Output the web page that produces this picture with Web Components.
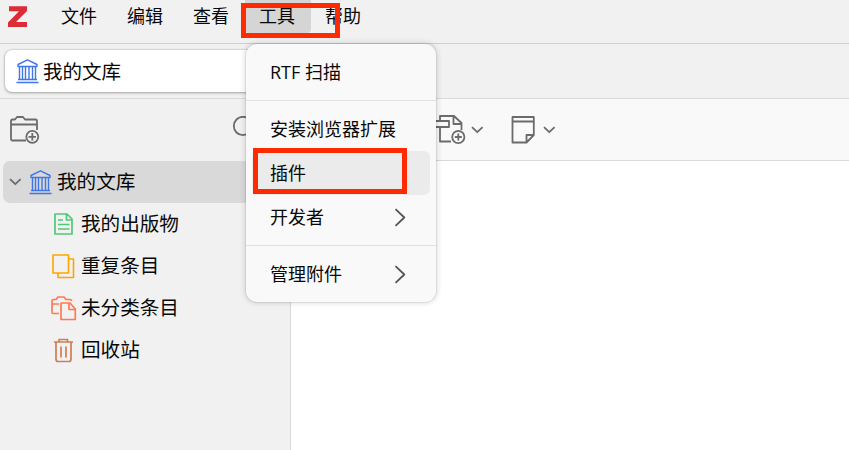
<!DOCTYPE html>
<html lang="zh-CN">
<head>
<meta charset="utf-8">
<title>我的文库</title>
<style>
html,body{margin:0;height:100%;overflow:hidden}
body{font-family:"Open Sans","Noto Sans CJK SC",sans-serif;color:#080808;background:#f1f1f1}
</style>
</head>
<body>
<library-app></library-app>
<script>
const icons = {
  logo: [20,22,'<path d="M2 1.3H20V6L9 17H20V22H1V17.4L12 6.2H2Z" fill="#dc2c38" stroke="none"/>'],
  library: [24,25,'<path d="M2 5.5 11.5 .8 21 5.5V7.5H2ZM3.5 8V20M6.5 8V20M9.5 8V20M13 8V20M16.5 8V20M19.5 8V20M2 20.5H21M.5 23.5H22.5" stroke="#4076e8" stroke-width="1.4"/>'],
  folderAdd: [30,28,'<path d="M16 24.5H2.5Q1 24.5 1 23V5Q1 3.5 2.5 3.5H5L7 1H13L15 3.5H25.5Q27 3.5 27 5V14M1 8.5H27"/><circle cx="22.3" cy="20.8" r="6"/><path d="M22.3 17V24.6M18.5 20.8H26"/>'],
  search: [24,24,'<circle cx="11" cy="10" r="9.2"/><path d="m18 17 5 6"/>'],
  down: [13,8,'<path d="m1 1.2 5.3 5 5.3-5" stroke-width="1.8"/>'],
  right: [12,19,'<path d="m1.5 1.2 8.8 8.3-8.8 8.3" stroke="#555" stroke-width="1.8"/>'],
  report: [20,23,'<path d="M1 1H13L18 6V21H1ZM12.5 1V7H18M4 7H9M4 11.5H15.5M4 16H15.5" stroke="#50c878" stroke-width="1.7"/>'],
  duplicate: [24,25,'<path d="M1 1H16.5V19H1ZM17 5H21.5V23.5H6V19" stroke="#ffa500" stroke-width="1.6"/>'],
  unfiled: [26,25,'<path d="M8 17.5H2Q1 17.5 1 16V5Q1 3.5 2.5 3.5H5L7 1H13L15 3.5H18.5Q20.5 3.5 20.5 5M1 8H8M10 7H19L24.3 13V23.5H10ZM18 7V13.5H24" stroke="#ff7a50" stroke-width="1.7"/>'],
  trash: [20,25,'<path d="M0 4H19M5 4V1.5H13.5V4M2 4V21Q2 23.5 4 23.5H15Q17 23.5 17 21V4M7 8.5V19.5M12 8.5V19.5" stroke="#cd7f56" stroke-width="1.7"/>'],
  docAdd: [30,29,'<path d="M15 26.5H4V13M4 6V1H18L25.5 8V15M17.5 1V9H25.5M0 6H13V12H0"/><circle cx="22.3" cy="22" r="6.1"/><path d="M22.3 18.5V25.5M18.8 22H25.8"/>'],
  note: [24,28,'<path d="M1.5 1H22.8V19L15.5 26.5H1.5ZM1.5 5.5H22.8M22.8 19H15.5V26.5"/>']
};
class AppIcon extends HTMLElement {
  connectedCallback(){
    const [w,h,body]=icons[this.getAttribute('name')];
    this.attachShadow({mode:'open'}).innerHTML=`<style>:host{display:block;flex:none;width:${w}px;height:${h}px}svg{display:block}</style><svg width="${w}" height="${h}" viewBox="0 0 ${w} ${h}" fill="none" stroke="#6b6b6b" stroke-width="1.8" stroke-linejoin="round">${body}</svg>`;
  }
}
const define=(name,html)=>{
  const t=document.createElement('template');t.innerHTML=html;
  customElements.define(name,class extends HTMLElement{
    constructor(){super();this.attachShadow({mode:'open'}).append(t.content.cloneNode(true));}
  });
};
customElements.define('app-icon',AppIcon);
define('menu-title',`<style>:host{display:block;box-sizing:border-box;width:66px;height:33px;padding-right:2px;text-align:center;font-size:18px;line-height:32px;border-radius:0 0 4px 4px}:host([active]){background:#d5d5d5}</style><slot></slot>`);
define('menu-bar',`<style>:host{display:flex;box-sizing:border-box;height:44px;border-bottom:1px solid #cfcfcf;background:#f1f1f1}app-icon{margin:5px 20px 0 7px}</style><app-icon name="logo"></app-icon><slot></slot>`);
define('tab-bar',`<style>:host{display:flex;box-sizing:border-box;height:55px;padding:6px 5px;border-bottom:1px solid #d9d9d9}.tab{display:flex;align-items:center;box-sizing:border-box;width:286px;height:42px;padding-left:11px;gap:3px;background:#fff;border-radius:7px;box-shadow:0 0 2px #0004,0 1px 3px #0004;font-size:19.5px;line-height:42px}span{padding-top:1px}</style><div class="tab"><app-icon name="library"></app-icon><span><slot></slot></span></div>`);
define('tree-item',`<style>:host{display:flex;align-items:center;box-sizing:border-box;height:42px;margin-left:3px;padding-left:49px;font-size:19.6px;line-height:42px}:host([root]){background:#d9d9d9;border-radius:7px;padding-left:6px;margin-right:4px}.icon{display:flex;justify-content:center;width:24px;margin-right:5px}:host([root]) .icon{margin:0 4px 0 7px}</style><slot name="arrow"></slot><div class="icon"><slot name="icon"></slot></div><span><slot></slot></span>`);
define('side-bar',`<style>:host{display:block;box-sizing:border-box;width:291px;border-right:1px solid #d9d9d9;background:#f1f1f1}.tools{display:flex;justify-content:space-between;box-sizing:border-box;height:62px;padding:17px 34px 0 10px}</style><div class="tools"><app-icon name="folderAdd"></app-icon><app-icon name="search"></app-icon></div><slot></slot>`);
define('item-pane',`<style>:host{display:block;flex:1;background:#fff}.tools{display:flex;align-items:center;box-sizing:border-box;height:62px;padding-left:145px;background:#f9f9f9;border-bottom:1px solid #d9d9d9}.note{margin-left:27px}.down{margin-left:5px}.note+.down{margin-left:8px}</style><div class="tools"><app-icon name="docAdd"></app-icon><app-icon class="down" name="down"></app-icon><app-icon class="note" name="note"></app-icon><app-icon class="down" name="down"></app-icon></div>`);
define('menu-item',`<style>:host{display:flex;justify-content:space-between;align-items:center;height:44px;padding:0 24px 0 18px;border-radius:6px;font-size:18px;line-height:44px}:host([active]){background:#ebebeb}</style><span><slot></slot></span><slot name="arrow"></slot>`);
define('menu-line',`<style>:host{display:block;height:1px;margin:6px -6px;background:#e1e1e1}</style>`);
define('popup-menu',`<style>:host{position:absolute;left:246px;top:44px;box-sizing:border-box;width:190px;height:258px;padding:6px;border-radius:11px;background:#f9f9f9;box-shadow:0 0 0 1px #0000000f,0 0 6px #0003}</style><slot></slot>`);
define('focus-frame',`<style>:host{position:absolute;box-sizing:border-box;border:5px solid #ff2a00}:host([for=title]){left:241px;top:3px;width:99px;height:35px}:host([for=item]){left:253px;top:148px;width:154px;height:46px}</style>`);
define('library-app',`<style>:host{display:flex;flex-direction:column;position:relative;height:100vh;overflow:hidden}.main{display:flex;flex:1}</style>
<menu-bar><menu-title>文件</menu-title><menu-title>编辑</menu-title><menu-title>查看</menu-title><menu-title active>工具</menu-title><menu-title>帮助</menu-title></menu-bar>
<tab-bar>我的文库</tab-bar>
<div class="main"><side-bar>
<tree-item root><app-icon slot="arrow" name="down"></app-icon><app-icon slot="icon" name="library"></app-icon>我的文库</tree-item>
<tree-item><app-icon slot="icon" name="report"></app-icon>我的出版物</tree-item>
<tree-item><app-icon slot="icon" name="duplicate"></app-icon>重复条目</tree-item>
<tree-item><app-icon slot="icon" name="unfiled"></app-icon>未分类条目</tree-item>
<tree-item><app-icon slot="icon" name="trash"></app-icon>回收站</tree-item>
</side-bar><item-pane></item-pane></div>
<popup-menu><menu-item>RTF 扫描</menu-item><menu-line></menu-line><menu-item>安装浏览器扩展</menu-item><menu-item active>插件</menu-item><menu-item>开发者<app-icon slot="arrow" name="right"></app-icon></menu-item><menu-line></menu-line><menu-item>管理附件<app-icon slot="arrow" name="right"></app-icon></menu-item></popup-menu>
<focus-frame for="title"></focus-frame><focus-frame for="item"></focus-frame>`);
</script>
</body>
</html>
